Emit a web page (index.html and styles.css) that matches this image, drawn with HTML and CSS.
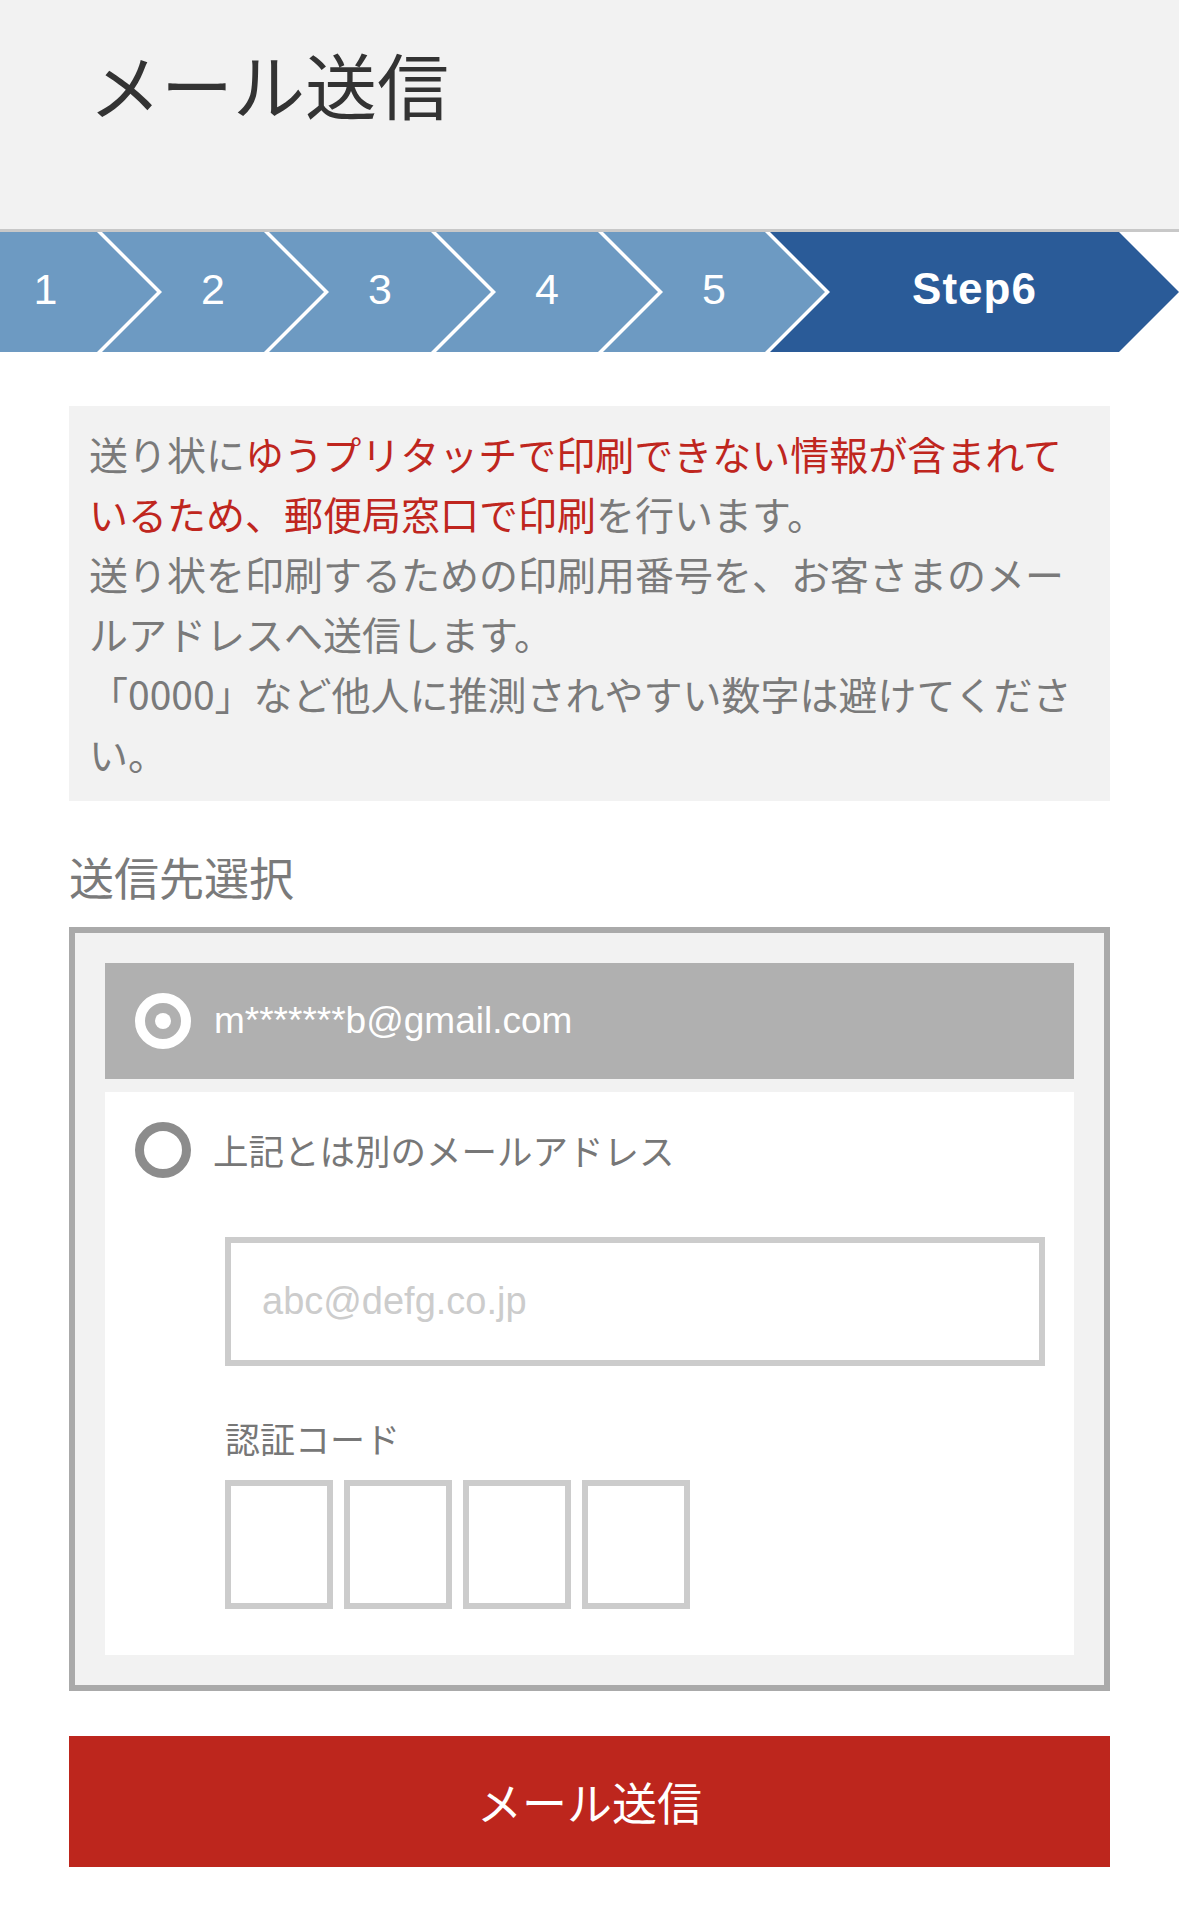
FILE: index.html
```html
<!DOCTYPE html>
<html lang="ja">
<head>
<meta charset="utf-8">
<title>メール送信</title>
<link rel="stylesheet" href="styles.css">
</head>
<body>
<header class="page-header">
  <h1 class="page-title">メール送信</h1>
</header>
<nav class="steps">
  <div class="step step-first"><span>1</span></div>
  <div class="step"><span>2</span></div>
  <div class="step"><span>3</span></div>
  <div class="step"><span>4</span></div>
  <div class="step"><span>5</span></div>
  <div class="step step-current"><span>Step6</span></div>
</nav>
<main class="content">
  <div class="notice">
    <p>送り状に<span class="em">ゆうプリタッチで印刷できない情報が含まれて<br>いるため、郵便局窓口で印刷</span>を行います。<br>送り状を印刷するための印刷用番号を、お客さまのメー<br>ルアドレスへ送信します。<br>「0000」など他人に推測されやすい数字は避けてくださ<br>い。</p>
  </div>
  <h2 class="section-title">送信先選択</h2>
  <div class="select-box">
    <div class="option option-selected">
      <div class="option-head">
        <span class="radio radio-on"></span>
        <span class="option-text option-email">m*******b@gmail.com</span>
      </div>
    </div>
    <div class="option option-other">
      <div class="option-head">
        <span class="radio"></span>
        <span class="option-text">上記とは別のメールアドレス</span>
      </div>
      <div class="option-body">
        <input class="email-input" type="text" placeholder="abc@defg.co.jp">
        <div class="code-label">認証コード</div>
        <div class="code-boxes">
          <input class="code-box" type="text">
          <input class="code-box" type="text">
          <input class="code-box" type="text">
          <input class="code-box" type="text">
        </div>
      </div>
    </div>
  </div>
  <button class="submit" type="button">メール送信</button>
</main>
</body>
</html>
```
FILE: styles.css
```css
* { box-sizing: border-box; }
html, body { margin: 0; padding: 0; }
body {
  background: #fff;
  font-family: "Noto Sans CJK JP", "Noto Sans", sans-serif;
  color: #777;
}

.page-header {
  height: 232px;
  background: #f2f2f2;
  border-bottom: 3px solid #c8c8c8;
  padding: 47px 0 0 89px;
}
.page-title {
  margin: 0;
  font-size: 72px;
  line-height: 72px;
  font-weight: 400;
  color: #333;
}

.steps {
  display: flex;
  height: 120px;
  background: #fff;
}
.step {
  height: 120px;
  width: 222px;
  margin-left: -55px;
  background: #6d9ac2;
  color: #fff;
  display: flex;
  align-items: center;
  justify-content: center;
  padding: 0 60px 6px;
  font-family: "Liberation Sans", "Noto Sans", sans-serif;
  font-size: 43px;
  line-height: 1;
  clip-path: polygon(0 0, calc(100% - 60px) 0, 100% 50%, calc(100% - 60px) 100%, 0 100%, 60px 50%);
}
.step-first {
  width: 157px;
  margin-left: 0;
  padding: 0 66px 6px 0;
  clip-path: polygon(0 0, calc(100% - 60px) 0, 100% 50%, calc(100% - 60px) 100%, 0 100%);
}
.step-current {
  width: 409px;
  background: #2a5b98;
  font-weight: 700;
  font-size: 44px;
  letter-spacing: 1px;
}

.content {
  padding: 0 69px 40px;
}

.notice {
  margin-top: 54px;
  background: #f2f2f2;
  padding: 17px 18px 18px 20px;
}
.notice p {
  margin: 0;
  font-size: 39px;
  line-height: 60px;
  color: #7a7a7a;
  white-space: nowrap;
}
.notice .em { color: #bf261e; }

.section-title {
  margin: 46px 0 20px;
  font-size: 45px;
  line-height: 60px;
  font-weight: 400;
  color: #7a7a7a;
}

.select-box {
  border: 6px solid #aaa;
  background: #f2f2f2;
  padding: 30px;
  display: flex;
  flex-direction: column;
  gap: 13px;
}
.option { background: #fff; }
.option-selected { background: #b0b0b0; }
.option-head {
  height: 116px;
  display: flex;
  align-items: center;
  padding-left: 30px;
}
.radio {
  width: 56px;
  height: 56px;
  flex-shrink: 0;
  border-radius: 50%;
  border: 9px solid #8c8c8c;
  background: #fff;
}
.radio-on {
  border: 10px solid #fff;
  background: transparent;
  display: flex;
  align-items: center;
  justify-content: center;
}
.radio-on::after {
  content: "";
  width: 16px;
  height: 16px;
  border-radius: 50%;
  background: #fff;
}
.option-text {
  margin-left: 22px;
  font-size: 35.5px;
  line-height: 50px;
  color: #777;
}
.option-email {
  margin-left: 23px;
  color: #fff;
  font-family: "Liberation Sans", "Noto Sans", sans-serif;
  font-size: 37px;
}

.option-body {
  padding: 29px 29px 46px 120px;
}
.email-input {
  display: block;
  width: 100%;
  height: 129px;
  margin: 0;
  border: 6px solid #ccc;
  border-radius: 0;
  background: #fff;
  padding: 0 0 0 31px;
  font-family: "Liberation Sans", "Noto Sans", sans-serif;
  font-size: 38px;
  color: #333;
  outline: none;
  -webkit-appearance: none;
  appearance: none;
}
.email-input::placeholder { color: #ccc; }

.code-label {
  margin-top: 47px;
  font-size: 35px;
  line-height: 50px;
  color: #777;
}
.code-boxes {
  margin-top: 17px;
  display: flex;
  gap: 11px;
}
.code-box {
  width: 108px;
  height: 129px;
  margin: 0;
  border: 6px solid #ccc;
  border-radius: 0;
  background: #fff;
  padding: 0;
  outline: none;
  -webkit-appearance: none;
  appearance: none;
}

.submit {
  display: block;
  width: 100%;
  height: 131px;
  margin-top: 45px;
  border: none;
  border-radius: 0;
  background: #bd261d;
  color: #fff;
  font-family: "Noto Sans CJK JP", "Noto Sans", sans-serif;
  font-size: 45px;
  line-height: 1;
  padding: 0;
  cursor: pointer;
}
```
